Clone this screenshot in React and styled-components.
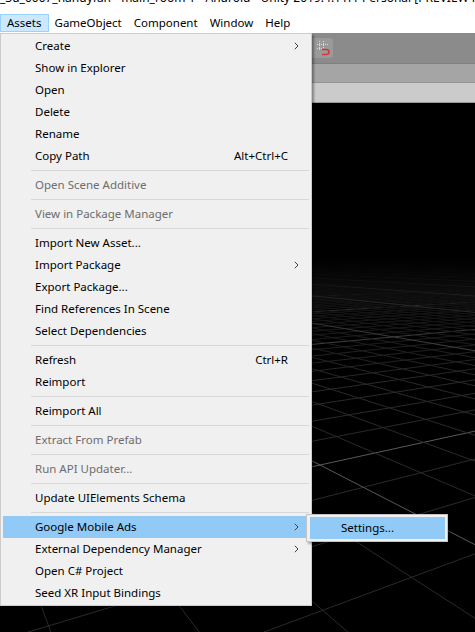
import React from "react";
import styled, { createGlobalStyle } from "styled-components";

const GlobalStyle = createGlobalStyle`
  html, body {
    margin: 0;
    padding: 0;
    background: #ffffff;
  }
  body {
    font-family: "Noto Sans", "Liberation Sans", sans-serif;
    font-size: 11.5px;
    color: #000;
  }
`;

const MENUS = ["Assets", "GameObject", "Component", "Window", "Help"];

const ITEMS = [
  { label: "Create", sub: true },
  { label: "Show in Explorer" },
  { label: "Open" },
  { label: "Delete" },
  { label: "Rename" },
  { label: "Copy Path", shortcut: "Alt+Ctrl+C" },
  { sep: true },
  { label: "Open Scene Additive", disabled: true },
  { sep: true },
  { label: "View in Package Manager", disabled: true },
  { sep: true },
  { label: "Import New Asset..." },
  { label: "Import Package", sub: true },
  { label: "Export Package..." },
  { label: "Find References In Scene" },
  { label: "Select Dependencies" },
  { sep: true },
  { label: "Refresh", shortcut: "Ctrl+R" },
  { label: "Reimport" },
  { sep: true },
  { label: "Reimport All" },
  { sep: true },
  { label: "Extract From Prefab", disabled: true },
  { sep: true },
  { label: "Run API Updater...", disabled: true },
  { sep: true },
  { label: "Update UIElements Schema" },
  { sep: true },
  { label: "Google Mobile Ads", sub: true, active: true },
  { label: "External Dependency Manager", sub: true },
  { label: "Open C# Project" },
  { label: "Seed XR Input Bindings" },
];

const Window = styled.div`
  position: relative;
  width: 475px;
  height: 632px;
  overflow: hidden;
  display: flex;
  flex-direction: column;
`;

const TitleBar = styled.div`
  height: 11px;
  overflow: hidden;
  background: #fff;
`;

const TitleText = styled.div`
  margin-top: -9px;
  line-height: 14px;
  font-size: 12px;
  white-space: nowrap;
  color: #000;
`;

const MenuBar = styled.div`
  height: 22px;
  box-sizing: border-box;
  padding-top: 3px;
  display: flex;
  align-items: flex-start;
  background: #fff;
`;

const MenuTitle = styled.div`
  height: 18px;
  box-sizing: border-box;
  padding: 0 ${(p) => (p.$active ? 6 : 5)}px;
  line-height: 15px;
  border: 1px solid ${(p) => (p.$active ? "#99d1ff" : "transparent")};
  background: ${(p) => (p.$active ? "#cce8ff" : "transparent")};
  white-space: nowrap;
`;

const Editor = styled.div`
  flex: 1;
  display: flex;
  flex-direction: column;
  min-height: 0;
`;

const Toolbar = styled.div`
  height: ${(p) => p.$h}px;
  flex-shrink: 0;
  box-sizing: border-box;
  background: ${(p) => p.$bg};
  border-bottom: 1px solid ${(p) => p.$line};
  display: flex;
  align-items: center;
  padding-left: 302px;
`;

const ToolButton = styled.div`
  width: 31px;
  height: 20px;
  border-radius: 3px;
  background: #9a9a9a;
  display: flex;
  align-items: center;
  justify-content: flex-end;
  padding-right: 3px;
  box-sizing: border-box;
`;

const SceneView = styled.div`
  flex: 1;
  background: #000;
  min-height: 0;
  svg {
    display: block;
  }
`;

const Dropdown = styled.div`
  position: absolute;
  left: 0;
  top: 33px;
  width: 312px;
  box-sizing: border-box;
  padding: 1px 2px;
  background: #f0f0f0;
  border: 1px solid #cccccc;
  box-shadow: 2px 2px 2px rgba(0, 0, 0, 0.35);
`;

const Row = styled.div`
  height: 22px;
  box-sizing: border-box;
  padding-bottom: 1px;
  display: grid;
  grid-template-columns: 1fr auto 21px;
  align-items: center;
  padding-left: 32px;
  background: ${(p) => (p.$active ? "#91c9f7" : "transparent")};
  color: ${(p) => (p.$disabled ? "#6d6d6d" : "#000")};
  white-space: nowrap;
`;

const Shortcut = styled.span`
  text-align: right;
`;

const Arrow = styled.span`
  display: flex;
  align-items: center;
  padding-left: 6px;
`;

const Separator = styled.div`
  height: 1px;
  margin: 3px 0 3px 28px;
  background: #d7d7d7;
`;

const SubMenu = styled.div`
  position: absolute;
  left: 306px;
  top: 514px;
  width: 142px;
  box-sizing: border-box;
  padding: 2px 2px 2px 3px;
  background: #f0f0f0;
  border: 1px solid #c4c4c4;
  box-shadow: 2px 2px 2px rgba(0, 0, 0, 0.3);
`;

const SubRow = styled.div`
  height: 22px;
  line-height: 21px;
  padding-left: 31px;
  background: #91c9f7;
  white-space: nowrap;
`;

const Chevron = () => (
  <svg width="5" height="8" viewBox="0 0 5 8">
    <path d="M0.8 0.8 L4 4 L0.8 7.2" fill="none" stroke="#404040" strokeWidth="1" />
  </svg>
);

const SnapIcon = () => (
  <svg width="14" height="16" viewBox="0 0 14 16">
    <g stroke="#d8d8d8" strokeWidth="1" strokeDasharray="1 1">
      <line x1="3.5" y1="1" x2="3.5" y2="11" />
      <line x1="7.5" y1="1" x2="7.5" y2="8" />
      <line x1="1" y1="4.5" x2="12" y2="4.5" />
      <line x1="1" y1="8.5" x2="6" y2="8.5" />
    </g>
    <path d="M6 9.5 H10.5 A2.5 2.5 0 0 1 10.5 14.5 H6" fill="none" stroke="#d23a3a" strokeWidth="1.6" />
  </svg>
);

// perspective floor grid of the scene view
const GRID_W = 475;
const GRID_H = 529;
const HORIZON = 152;
const CX = 300;
const F = 617;
const CAM_H = 3;
const THETA = Math.atan(980 / 617);

const buildGrid = () => {
  const z0 = (F * CAM_H) / 210;
  const o = { x: (20 * z0) / F, z: z0 };
  const dA = { x: Math.sin(THETA), z: Math.cos(THETA) };
  const dB = { x: Math.cos(THETA), z: -Math.sin(THETA) };
  const lines = [];
  const project = (p) => ({
    x: CX + (F * p.x) / p.z,
    y: HORIZON + (F * CAM_H) / p.z,
  });
  const addFamily = (dir, step, fam) => {
    for (let i = -250; i <= 250; i++) {
      const base = { x: o.x + i * step.x, z: o.z + i * step.z };
      const zMin = 2.5;
      const zMax = 3000;
      if (Math.abs(dir.z) < 1e-6) continue;
      const ta = (zMin - base.z) / dir.z;
      const tb = (zMax - base.z) / dir.z;
      const t0 = Math.max(-5000, Math.min(ta, tb));
      const t1 = Math.min(5000, Math.max(ta, tb));
      if (t0 >= t1) continue;
      const a = project({ x: base.x + t0 * dir.x, z: base.z + t0 * dir.z });
      const b = project({ x: base.x + t1 * dir.x, z: base.z + t1 * dir.z });
      lines.push({ key: fam + i, a, b, major: i % 10 === 0 });
    }
  };
  addFamily(dA, dB, "a");
  addFamily(dB, dA, "b");
  return lines;
};

const GRID_LINES = buildGrid();

const SceneGrid = () => (
  <svg width={GRID_W} height={GRID_H}>
    <defs>
      <linearGradient id="fade" x1="0" y1="0" x2="0" y2="1">
        <stop offset="0" stopColor="#000" stopOpacity="1" />
        <stop offset="0.55" stopColor="#000" stopOpacity="1" />
        <stop offset="0.7" stopColor="#000" stopOpacity="0.6" />
        <stop offset="1" stopColor="#000" stopOpacity="0" />
      </linearGradient>
    </defs>
    {GRID_LINES.map((l) => (
      <line
        key={l.key}
        x1={l.a.x}
        y1={l.a.y}
        x2={l.b.x}
        y2={l.b.y}
        stroke={l.major ? "#5a5a5a" : "#2a2a2a"}
        strokeWidth="1"
      />
    ))}
    <rect x="0" y="0" width={GRID_W} height={HORIZON + 130} fill="url(#fade)" />
  </svg>
);

export default function App() {
  return (
    <Window>
      <GlobalStyle />
      <TitleBar>
        <TitleText>
          _3d_0007_handyfan - main_room 1 - Android - Unity 2019.4.11f1 Personal [PREVIEW PACKAGES IN USE]
        </TitleText>
      </TitleBar>
      <MenuBar>
        {MENUS.map((m) => (
          <MenuTitle key={m} $active={m === "Assets"}>
            {m}
          </MenuTitle>
        ))}
      </MenuBar>
      <Editor>
        <Toolbar $h={31} $bg="#8b8b8b" $line="#808080">
          <ToolButton>
            <SnapIcon />
          </ToolButton>
        </Toolbar>
        <Toolbar $h={19} $bg="#a5a5a5" $line="#939393" />
        <Toolbar $h={20} $bg="#cbcbcb" $line="#9a9a9a" />
        <SceneView>
          <SceneGrid />
        </SceneView>
      </Editor>
      <Dropdown>
        {ITEMS.map((it, i) =>
          it.sep ? (
            <Separator key={i} />
          ) : (
            <Row key={i} $active={it.active} $disabled={it.disabled}>
              <span>{it.label}</span>
              <Shortcut>{it.shortcut}</Shortcut>
              <Arrow>{it.sub && <Chevron />}</Arrow>
            </Row>
          )
        )}
      </Dropdown>
      <SubMenu>
        <SubRow>Settings...</SubRow>
      </SubMenu>
    </Window>
  );
}
